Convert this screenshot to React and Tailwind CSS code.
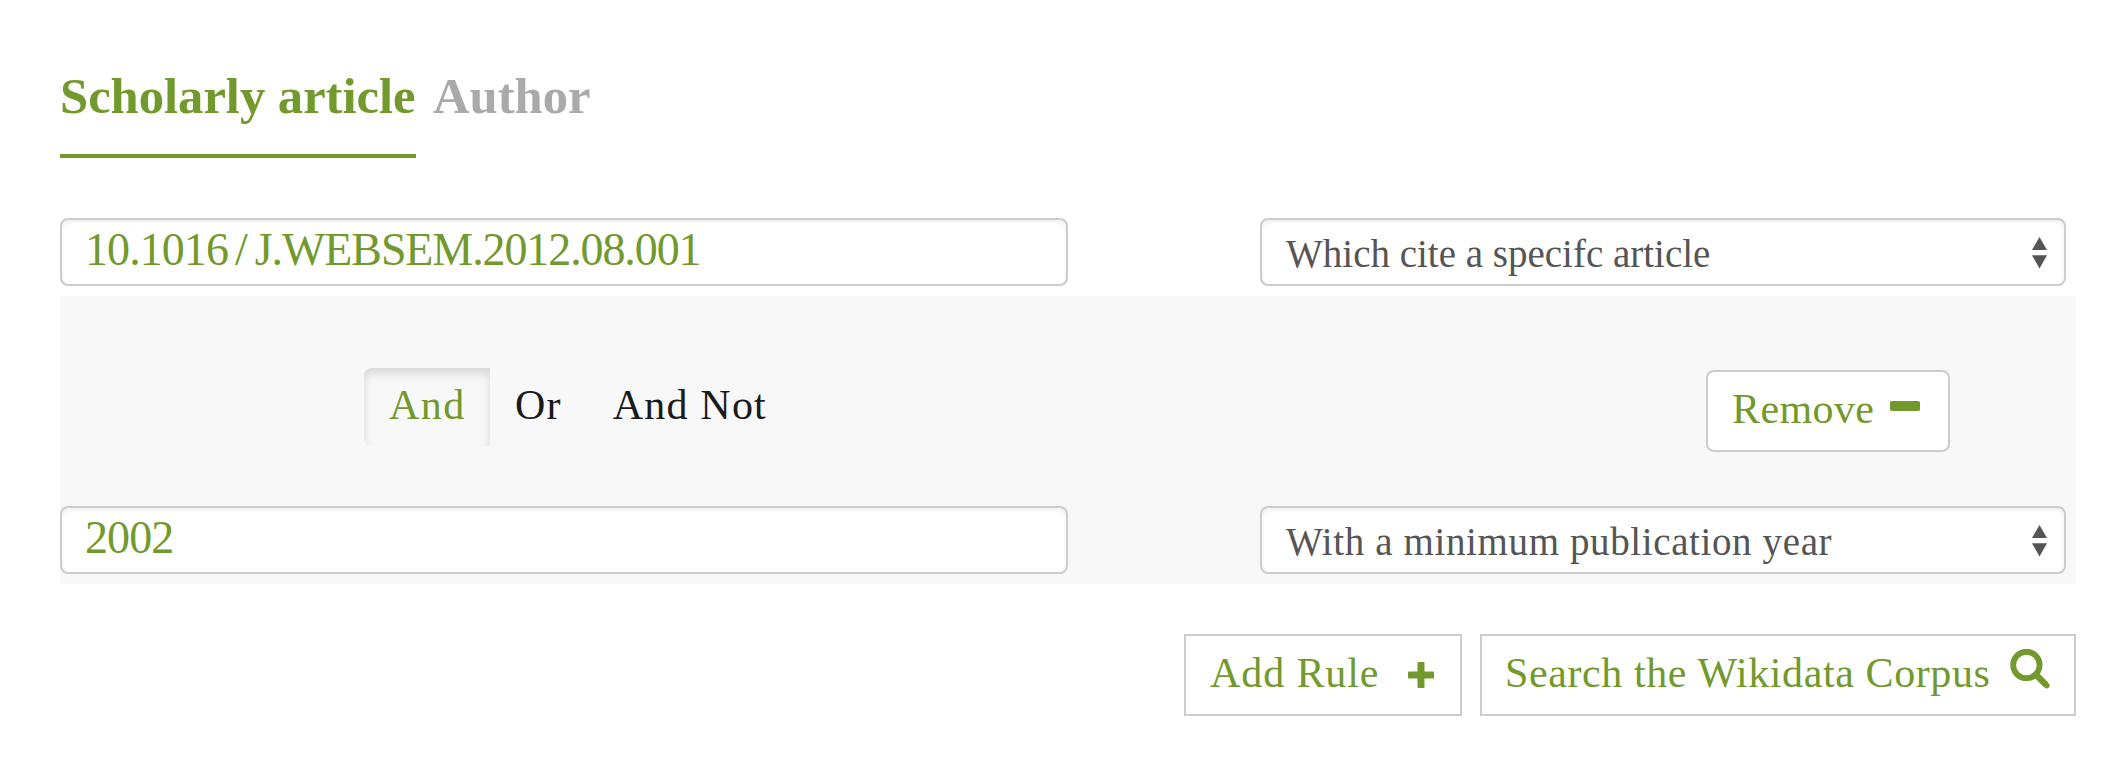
import React from "react";

function TextField({ children }) {
  return (
    <div className="flex h-[68px] w-[1008px] items-start rounded-[8px] border-2 border-[#ccc] bg-white pl-[23px] text-[46px] leading-[59px] text-[#72992c] shadow-[inset_0_2px_4px_rgba(0,0,0,0.075)]">
      {children}
    </div>
  );
}

function SelectField({ children, spacing = "" }) {
  return (
    <div className="flex h-[68px] w-[806px] items-start justify-between rounded-[8px] border-2 border-[#ccc] bg-white pr-[17px] pl-[24px] text-[39px] leading-[68px] text-[#555] shadow-[inset_0_2px_4px_rgba(0,0,0,0.075)]">
      <span className={spacing}>{children}</span>
      <svg className="mt-[17px] h-[32px] w-[15px]" viewBox="0 0 15 32" fill="#555">
        <path d="M7.5 0 15 13H0zM7.5 31.5 0 18.3h15z" />
      </svg>
    </div>
  );
}

export default function App() {
  return (
    <main className="h-[776px] w-[2108px] overflow-hidden bg-white pt-[60px] pr-[32px] pl-[60px] font-['Liberation_Serif',serif] whitespace-nowrap">
      <nav className="flex h-[98px] gap-[17px] text-[50.6px] leading-[72px] font-bold">
        <a className="w-[356px] border-b-4 border-[#72992c] text-[#72992c]">Scholarly article</a>
        <a className="text-[#aaa]">Author</a>
      </nav>

      <div className="mt-[60px] flex justify-between pr-[10px]">
        <TextField>
          <span className="tracking-[-0.93px]">10.1016</span>
          <span className="mr-[7px] ml-[7px]">/</span>
          <span className="tracking-[-1.1px]">J.WEBSEM.2012.08.001</span>
        </TextField>
        <SelectField>Which cite a specifc article</SelectField>
      </div>

      <section className="mt-[10px] flex h-[288px] flex-col bg-[#f8f8f8] pt-[72px]">
        <div className="flex h-[138px] items-start justify-between pr-[126px] pl-[304px] text-[42px] leading-[74px]">
          <div className="flex items-start text-[#1a1a1a]">
            <button className="flex h-[78px] w-[126px] items-start rounded-l-[8px] pl-[25px] tracking-[1.4px] text-[#72992c] shadow-[inset_0_6px_10px_rgba(0,0,0,0.125)]">
              And
            </button>
            <button className="ml-[25px] tracking-[1.2px]">Or</button>
            <button className="ml-[51px] tracking-[1.2px]">And Not</button>
          </div>
          <button className="mt-[2px] flex h-[82px] w-[244px] items-start rounded-[8px] border-2 border-[#ccc] bg-white pl-[24px] tracking-[0.4px] text-[#72992c]">
            <span className="w-[158px] text-left">Remove</span>
            <svg className="mt-[29px] h-[10px] w-[30px]" viewBox="0 0 30 10">
              <rect width="30" height="10" rx="1.8" fill="#72992c" />
            </svg>
          </button>
        </div>
        <div className="flex justify-between pr-[10px]">
          <TextField>
            <span className="tracking-[-0.9px]">2002</span>
          </TextField>
          <SelectField spacing="tracking-[0.62px]">With a minimum publication year</SelectField>
        </div>
      </section>

      <footer className="mt-[50px] flex justify-end gap-[18px] text-[42px] leading-[74px] text-[#72992c]">
        <button className="flex h-[82px] w-[278px] items-start border-2 border-[#ccc] bg-white pl-[24px]">
          <span className="w-[198px] text-left tracking-[0.9px]">Add Rule</span>
          <svg className="mt-[26px] size-[26px]" viewBox="0 0 26 26" fill="#72992c">
            <rect x="9.5" width="7" height="26" rx="1" />
            <rect y="9.5" width="26" height="7" rx="1" />
          </svg>
        </button>
        <button className="flex h-[82px] w-[596px] items-start border-2 border-[#ccc] bg-white pl-[23px]">
          <span className="w-[505px] text-left tracking-[0.6px]">Search the Wikidata Corpus</span>
          <svg className="mt-[13px] size-[41px]" viewBox="0 0 41 41" fill="none" stroke="#72992c">
            <circle cx="16.4" cy="16" r="13.2" strokeWidth="5.8" />
            <path d="M26 25.8 36 35.8" strokeWidth="6.4" />
            <path d="M35.6 35.4 36.8 36.6" strokeWidth="5.6" strokeLinecap="round" />
          </svg>
        </button>
      </footer>
    </main>
  );
}
